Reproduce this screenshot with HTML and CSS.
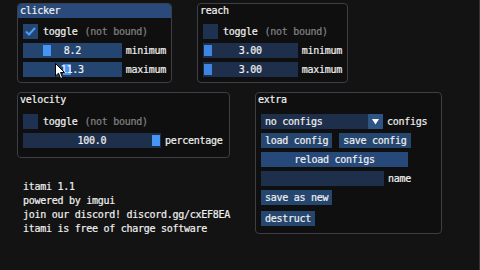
FILE: index.html
```html
<!DOCTYPE html>
<html lang="en">
<head>
  <meta charset="UTF-8" />
  <title>itami</title>
  <link rel="stylesheet" href="styles.css">
</head>
<body>
<div class="desk">

  <!-- clicker -->
  <div class="window clicker">
    <div class="title active">clicker</div>
    <div class="body">
      <div class="row">
        <span class="check hot">
          <svg width="15" height="15" viewBox="0 0 15 15"><polyline points="3,7.5 6,10.5 12,4" fill="none" stroke="#4a9cf7" stroke-width="2"/></svg>
        </span>
        <span class="lbl">toggle</span><span class="dim">(not bound)</span>
      </div>
      <div class="row">
        <div class="slider hot w101"><span class="grab lit" style="left:20px"></span><span class="val">8.2</span></div>
        <span class="side">minimum</span>
      </div>
      <div class="row">
        <div class="slider hot w101"><span class="grab lit" style="left:40px"></span><span class="val">11.3</span></div>
        <span class="side">maximum</span>
      </div>
    </div>
  </div>

  <!-- reach -->
  <div class="window reach">
    <div class="title">reach</div>
    <div class="body">
      <div class="row">
        <span class="check"></span>
        <span class="lbl">toggle</span><span class="dim">(not bound)</span>
      </div>
      <div class="row">
        <div class="slider w100"><span class="grab" style="left:1px"></span><span class="val">3.00</span></div>
        <span class="side">minimum</span>
      </div>
      <div class="row">
        <div class="slider w100"><span class="grab" style="left:1px"></span><span class="val">3.00</span></div>
        <span class="side">maximum</span>
      </div>
    </div>
  </div>

  <!-- velocity -->
  <div class="window velocity">
    <div class="title">velocity</div>
    <div class="body">
      <div class="row">
        <span class="check"></span>
        <span class="lbl">toggle</span><span class="dim">(not bound)</span>
      </div>
      <div class="row">
        <div class="slider w138"><span class="grab lit" style="left:129px"></span><span class="val">100.0</span></div>
        <span class="side">percentage</span>
      </div>
    </div>
  </div>

  <!-- extra -->
  <div class="window extra">
    <div class="title">extra</div>
    <div class="body">
      <div class="row">
        <div class="combo">
          <span class="combo-text">no configs</span>
          <span class="combo-arrow">
            <svg width="15" height="15" viewBox="0 0 15 15"><polygon points="4,5 11,5 7.5,10.5" fill="#fff"/></svg>
          </span>
        </div>
        <span class="side">configs</span>
      </div>
      <div class="row">
        <button class="btn">load config</button>
        <button class="btn gap7">save config</button>
      </div>
      <div class="row">
        <button class="btn wide">reload configs</button>
      </div>
      <div class="row">
        <div class="input"></div>
        <span class="side">name</span>
      </div>
      <div class="row">
        <button class="btn">save as new</button>
      </div>
      <div class="row spaced">
        <button class="btn">destruct</button>
      </div>
    </div>
  </div>

  <!-- about -->
  <div class="about">
    <div>itami 1.1</div>
    <div>powered by imgui</div>
    <div>join our discord! discord.gg/cxEF8EA</div>
    <div>itami is free of charge software</div>
  </div>

  <!-- mouse pointer -->
  <svg class="cursor" width="11" height="17" viewBox="0 0 11 17">
    <path d="M0.5 0.5 L0.5 13 L3.5 10.2 L5.6 15.5 L7.6 14.6 L5.5 9.5 L9.5 9.5 Z" fill="#fff" stroke="#000" stroke-width="1"/>
  </svg>

</div>
</body>
</html>
```

FILE: styles.css
```css
* {
  margin: 0;
  padding: 0;
  box-sizing: border-box;
}

body {
  background: #131313;
  font-family: 'DejaVu Sans Mono', 'Liberation Mono', monospace;
  font-size: 10px;
  letter-spacing: -0.27px;
  color: #f0f0f0;
  -webkit-text-stroke: 0.2px;
}

.desk {
  position: relative;
  width: 480px;
  height: 270px;
  overflow: hidden;
  border-right: 1px solid #34343a;
}

.window {
  position: absolute;
  background: #0f0f0f;
  border: 1px solid #3e3e46;
  border-radius: 4px;
  overflow: hidden;
}

.clicker  { left: 17px;  top: 3px;  width: 155px; height: 80px; }
.reach    { left: 197px; top: 3px;  width: 151px; height: 80px; }
.velocity { left: 17px;  top: 92px; width: 213px; height: 66px; }
.extra    { left: 255px; top: 92px; width: 187px; height: 142px; }

.title {
  height: 14px;
  line-height: 14px;
  padding: 0 2px;
  color: #f2f2f2;
}

.title.active {
  background: #294a7a;
}

.body {
  display: flex;
  flex-direction: column;
  gap: 4px;
  padding: 6px 5px 0;
}

.velocity .body,
.extra .body {
  padding-top: 7px;
}

.row {
  display: flex;
  align-items: center;
  height: 15px;
}

.row.spaced {
  margin-top: 2px;
}

.check {
  width: 15px;
  height: 15px;
  background: #1e3150;
  display: flex;
}

.check.hot {
  background: #24456f;
}

.lbl {
  margin-left: 5px;
}

.dim {
  margin-left: 7px;
  color: #838383;
}

.side {
  margin-left: 4px;
}

.slider {
  position: relative;
  height: 15px;
  background: #1d2f4a;
  display: flex;
  align-items: center;
  justify-content: center;
}

.slider.hot {
  background: #244570;
}

.w100 { width: 100px; }
.w101 { width: 101px; }
.w138 { width: 138px; }

.grab {
  position: absolute;
  top: 2px;
  width: 8px;
  height: 11px;
  background: #3d85e0;
}

.grab.lit {
  background: #4694f5;
}

.val {
  position: relative;
}

.combo {
  width: 122px;
  height: 15px;
  background: #1d2f4a;
  display: flex;
  align-items: center;
}

.combo-text {
  flex: 1;
  padding-left: 4px;
}

.combo-arrow {
  width: 15px;
  height: 15px;
  background: #2d5484;
  display: flex;
}

.btn {
  height: 15px;
  padding: 0 4px;
  background: #25466f;
  border: none;
  color: #f0f0f0;
  font: inherit;
  letter-spacing: inherit;
}

.btn.gap7 {
  margin-left: 7px;
}

.btn.wide {
  width: 147px;
  background: #27497a;
}

.input {
  width: 123px;
  height: 15px;
  background: #1d2f4a;
}

.about {
  position: absolute;
  left: 23px;
  top: 180px;
  line-height: 14px;
}

.cursor {
  position: absolute;
  left: 55px;
  top: 63px;
}
```
